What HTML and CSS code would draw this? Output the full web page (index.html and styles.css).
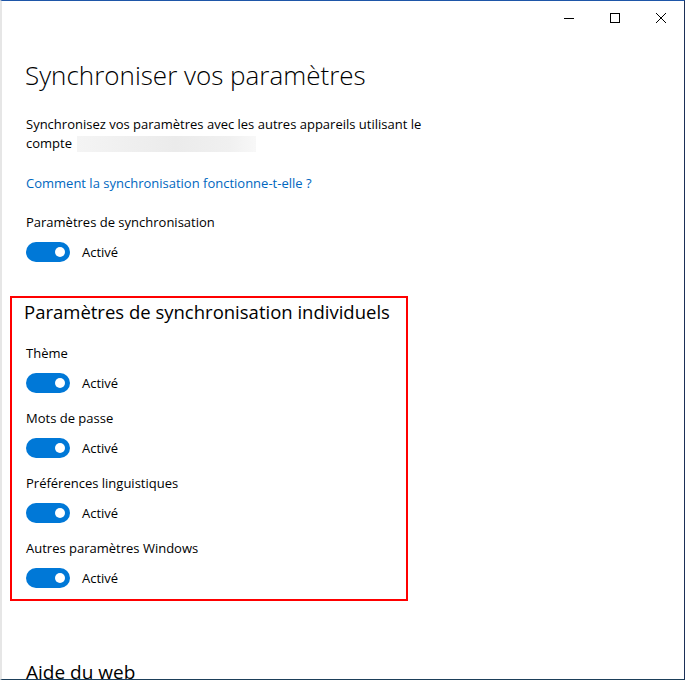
FILE: index.html
```html
<!DOCTYPE html>
<html lang="fr">
<head>
    <meta charset="UTF-8">
    <meta name="viewport" content="width=device-width, initial-scale=1.0">
    <title>Synchroniser vos paramètres</title>
    <link rel="stylesheet" href="styles.css">
</head>
<body>
    <div class="window">
        <div class="titlebar">
            <button class="caption-btn" aria-label="Réduire">
                <svg width="10" height="10" viewBox="0 0 10 10"><path d="M0 5.5h10" stroke="#000" stroke-width="1"/></svg>
            </button>
            <button class="caption-btn" aria-label="Agrandir">
                <svg width="10" height="10" viewBox="0 0 10 10"><rect x="0.5" y="0.5" width="9" height="9" fill="none" stroke="#000" stroke-width="1"/></svg>
            </button>
            <button class="caption-btn" aria-label="Fermer">
                <svg width="10" height="10" viewBox="0 0 10 10"><path d="M0 0L10 10M10 0L0 10" stroke="#000" stroke-width="1"/></svg>
            </button>
        </div>

        <div class="page">
            <h1 class="page-title">Synchroniser vos paramètres</h1>
            <p class="intro">Synchronisez vos paramètres avec les autres appareils utilisant le compte <span class="account"></span></p>
            <a class="link" href="#">Comment la synchronisation fonctionne-t-elle ?</a>

            <div class="setting">
                <div class="setting-label">Paramètres de synchronisation</div>
                <div class="toggle-row">
                    <span class="toggle"><span class="knob"></span></span>
                    <span class="toggle-state">Activé</span>
                </div>
            </div>

            <section class="group">
                <h2 class="group-title">Paramètres de synchronisation individuels</h2>

                <div class="setting">
                    <div class="setting-label">Thème</div>
                    <div class="toggle-row">
                        <span class="toggle"><span class="knob"></span></span>
                        <span class="toggle-state">Activé</span>
                    </div>
                </div>
                <div class="setting">
                    <div class="setting-label">Mots de passe</div>
                    <div class="toggle-row">
                        <span class="toggle"><span class="knob"></span></span>
                        <span class="toggle-state">Activé</span>
                    </div>
                </div>
                <div class="setting">
                    <div class="setting-label">Préférences linguistiques</div>
                    <div class="toggle-row">
                        <span class="toggle"><span class="knob"></span></span>
                        <span class="toggle-state">Activé</span>
                    </div>
                </div>
                <div class="setting">
                    <div class="setting-label">Autres paramètres Windows</div>
                    <div class="toggle-row">
                        <span class="toggle"><span class="knob"></span></span>
                        <span class="toggle-state">Activé</span>
                    </div>
                </div>
            </section>

            <h2 class="section-title">Aide du web</h2>
        </div>
    </div>
</body>
</html>
```

FILE: styles.css
```css
* {
    box-sizing: border-box;
}

html, body {
    margin: 0;
    padding: 0;
    overflow: hidden;
}

body {
    font-family: "Open Sans", "Noto Sans", sans-serif;
    color: #000;
    background: #fff;
}

.window {
    width: 685px;
    height: 680px;
    border-top: 1px solid #1e56a8;
    border-right: 1px solid #1b2f57;
    border-bottom: 1px solid #1d3f5a;
    border-left: 2px solid #e6e6e6;
    overflow: hidden;
    background: #fff;
}

/* caption buttons */
.titlebar {
    display: flex;
    justify-content: flex-end;
    height: 34px;
}

.caption-btn {
    width: 46px;
    height: 34px;
    border: 0;
    padding: 0;
    background: transparent;
    display: flex;
    align-items: center;
    justify-content: center;
}

.caption-btn svg {
    display: block;
}

.page {
    padding: 0 24px 0 24px;
}

.page-title {
    margin: 20px 0 0 -1px;
    font-size: 26px;
    font-weight: 300;
    line-height: 40px;
}

.intro {
    margin: 20px 0 0 0;
    max-width: 420px;
    font-size: 13px;
    line-height: 19px;
}

.account {
    display: inline-block;
    width: 179px;
    height: 16px;
    vertical-align: -4px;
    margin-left: 2px;
    background: linear-gradient(90deg, #f4f4f4, #ebebeb 55%, #f0f0f0 85%, #f8f8f8);
    filter: blur(0.6px);
}

.link {
    display: block;
    margin-top: 21px;
    font-size: 13px;
    line-height: 19px;
    color: #0067c0;
    text-decoration: none;
}

.setting {
    margin-top: 20px;
}

.setting-label {
    font-size: 13px;
    line-height: 19px;
}

.toggle-row {
    display: flex;
    align-items: center;
    gap: 12px;
    margin-top: 10px;
    height: 20px;
}

.toggle {
    width: 44px;
    height: 20px;
    border-radius: 10px;
    background: #0078d7;
    display: flex;
    align-items: center;
    justify-content: flex-end;
    padding-right: 5px;
}

.knob {
    width: 10px;
    height: 10px;
    border-radius: 50%;
    background: #fff;
}

.toggle-state {
    font-size: 13px;
    line-height: 19px;
}

/* highlighted block */
.group {
    margin: 34px 0 0 -16px;
    width: 398px;
    border: 2px solid #ff0000;
    padding: 0 0 11px 14px;
}

.group-title {
    margin: 0 0 0 -2px;
    font-size: 18.5px;
    font-weight: 400;
    line-height: 28px;
}

.group .setting {
    margin-top: 16px;
}

.group .setting:first-of-type {
    margin-top: 18px;
}

.section-title {
    margin: 57px 0 0 0;
    font-size: 19px;
    font-weight: 400;
    line-height: 28px;
}
```
